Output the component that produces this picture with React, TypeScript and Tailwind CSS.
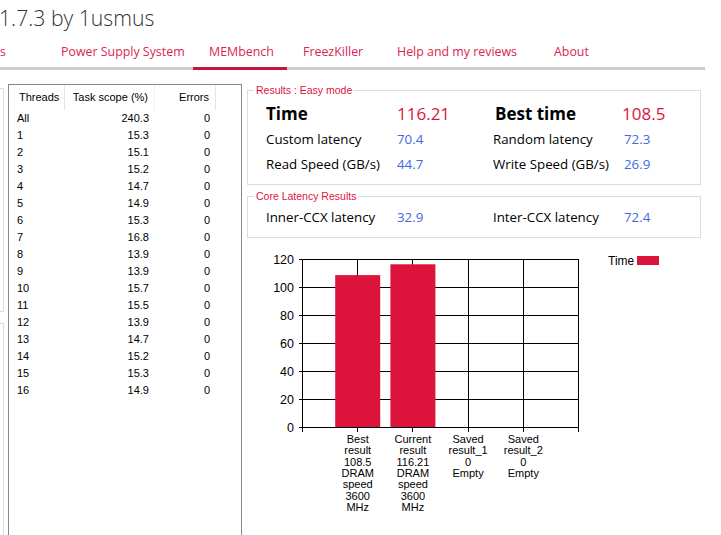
import React from "react";

const rows: [string, string][] = [
  ["All", "240.3"],
  ["1", "15.3"],
  ["2", "15.1"],
  ["3", "15.2"],
  ["4", "14.7"],
  ["5", "14.9"],
  ["6", "15.3"],
  ["7", "16.8"],
  ["8", "13.9"],
  ["9", "13.9"],
  ["10", "15.7"],
  ["11", "15.5"],
  ["12", "13.9"],
  ["13", "14.7"],
  ["14", "15.2"],
  ["15", "15.3"],
  ["16", "14.9"],
];

const tabs: { label: string; w: string; active?: boolean }[] = [
  { label: "s", w: "w-[45px]" },
  { label: "Power Supply System", w: "w-[148px]" },
  { label: "MEMbench", w: "w-[94px]", active: true },
  { label: "FreezKiller", w: "w-[94px]" },
  { label: "Help and my reviews", w: "w-[157px]" },
  { label: "About", w: "w-[68px]" },
];

function Chart() {
  const x0 = 55.5;
  const x1 = 331.5;
  const yTop = 14.5;
  const yBot = 182.5;
  const step = (x1 - x0) / 5;
  const cats = [1, 2, 3, 4].map((i) => x0 + step * i);
  const yLabels = [120, 100, 80, 60, 40, 20, 0];
  const labels = [
    ["Best", "result", "108.5", "DRAM", "speed", "3600", "MHz"],
    ["Current", "result", "116.21", "DRAM", "speed", "3600", "MHz"],
    ["Saved", "result_1", "0", "Empty"],
    ["Saved", "result_2", "0", "Empty"],
  ];
  const vals = [108.5, 116.21];
  return (
    <svg width="460" height="290" className="block" style={{ fontFamily: "'Liberation Sans', Arial, sans-serif" }}>
      {yLabels.map((v, i) => {
        const y = yTop + i * 28;
        return (
          <g key={v}>
            <line x1={x0 - 4} x2={x1} y1={y} y2={y} stroke="#000" strokeWidth="1" shapeRendering="crispEdges" />
            <text x={47} y={y} fontSize="12.5" textAnchor="end" dominantBaseline="central" fill="#000">
              {v}
            </text>
          </g>
        );
      })}
      {[x0, ...cats, x1].map((x, i) => (
        <line key={i} x1={x} x2={x} y1={yTop} y2={yBot + 4} stroke="#000" strokeWidth="1" shapeRendering="crispEdges" />
      ))}
      {vals.map((v, i) => {
        const h = (v / 120) * 168;
        return <rect key={i} x={cats[i] - 22.5} y={182 - h} width={45} height={h} fill="#dc143c" />;
      })}
      {labels.map((ls, i) => (
        <text key={i} fontSize="11" textAnchor="middle" fill="#000">
          {ls.map((l, j) => (
            <tspan key={j} x={cats[i]} y={198 + j * 11.3}>
              {l}
            </tspan>
          ))}
        </text>
      ))}
      <text x={361} y={16} fontSize="12" dominantBaseline="central" fill="#000">
        Time
      </text>
      <rect x={390} y={11} width={22} height={9} fill="#dc143c" />
    </svg>
  );
}

function GroupBox({ title, className, children }: { title: string; className?: string; children: React.ReactNode }) {
  return (
    <div className={`relative border border-[#dcdcdc] ${className ?? ""}`}>
      <div className="absolute -top-[7px] left-[6px] bg-white px-[2px] text-[10.5px] leading-[12px] text-[#dc143c] font-['Liberation_Sans',Arial,sans-serif]">
        {title}
      </div>
      {children}
    </div>
  );
}

function Row({ a, av, b, bv, big }: { a: string; av: string; b: string; bv: string; big?: boolean }) {
  if (big) {
    return (
      <div className="flex items-center h-[26px]">
        <div className="w-[149px] pl-[18px] text-[17px] font-bold text-black">{a}</div>
        <div className="w-[98px] text-[17px] text-[#dc143c]">{av}</div>
        <div className="w-[127px] text-[17px] font-bold text-black">{b}</div>
        <div className="text-[17px] text-[#dc143c]">{bv}</div>
      </div>
    );
  }
  return (
    <div className="flex items-center h-[25px]">
      <div className="w-[149px] pl-[18px] text-[13.3px] text-black whitespace-nowrap">{a}</div>
      <div className="w-[96px] text-[13.3px] text-[#4169e1]">{av}</div>
      <div className="w-[131px] text-[13.3px] text-black whitespace-nowrap">{b}</div>
      <div className="text-[13.3px] text-[#4169e1]">{bv}</div>
    </div>
  );
}

export default function App() {
  return (
    <div className="w-[721px] h-[535px] overflow-hidden bg-white relative font-['Open_Sans',sans-serif]">
      <div className="h-[36px] pt-[2px] text-[21.2px] leading-[32px] font-light text-[#333] -ml-[1px]">
        1.7.3 by 1usmus
      </div>
      <div className="w-[705px]">
        <div className="flex h-[31px] items-center">
          {tabs.map((t) => (
            <div
              key={t.label}
              className={`${t.w} h-full relative flex items-center ${t.label === "s" ? "pl-0" : "pl-[16px]"} text-[12.4px] text-[#dc2450] whitespace-nowrap`}
            >
              <span className="pt-[1px]">{t.label}</span>
              {t.active && <div className="absolute left-0 right-0 bottom-[-3px] h-[3px] bg-[#c8143c]" />}
            </div>
          ))}
        </div>
        <div className="h-[3px] bg-[#cccccc]" />
      </div>

      <div className="flex">
        <div className="w-[8px] flex flex-col shrink-0">
          <div className="mt-[18px] h-[224px] w-[4px] border-t border-r border-b border-[#dcdcdc]" />
          <div className="mt-[11px] h-[300px] w-[4px] border-t border-r border-[#dcdcdc]" />
        </div>

        <div className="mt-[14px] w-[234px] h-[480px] shrink-0 border border-[#828790] font-['Liberation_Sans',Arial,sans-serif] text-[11px] text-black">
          <div className="flex h-[25px] items-center">
            <div className="w-[56px] h-full flex items-center pl-[10px] border-r border-[#e5e5e5]">Threads</div>
            <div className="w-[90px] h-full flex items-center justify-end pr-[6px] border-r border-[#f0f0f0]">Task scope (%)</div>
            <div className="w-[61px] h-full flex items-center justify-end pr-[6px] border-r border-[#e5e5e5]">Errors</div>
          </div>
          {rows.map(([t, v]) => (
            <div key={t} className="flex h-[17px] items-center">
              <div className="w-[56px] pl-[8px]">{t}</div>
              <div className="w-[90px] text-right pr-[6px]">{v}</div>
              <div className="w-[61px] text-right pr-[6px]">0</div>
            </div>
          ))}
        </div>

        <div className="ml-[5px] w-[460px] flex flex-col">
          <GroupBox title="Results : Easy mode" className="mt-[20px] w-[454px] h-[95px] pt-[10px]">
            <Row big a="Time" av="116.21" b="Best time" bv="108.5" />
            <Row a="Custom latency" av="70.4" b="Random latency" bv="72.3" />
            <Row a="Read Speed (GB/s)" av="44.7" b="Write Speed (GB/s)" bv="26.9" />
          </GroupBox>
          <GroupBox title="Core Latency Results" className="mt-[11px] w-[454px] h-[42px] pt-[8px]">
            <Row a="Inner-CCX latency" av="32.9" b="Inter-CCX latency" bv="72.4" />
          </GroupBox>
          <div className="mt-[7px]">
            <Chart />
          </div>
        </div>
      </div>
    </div>
  );
}
